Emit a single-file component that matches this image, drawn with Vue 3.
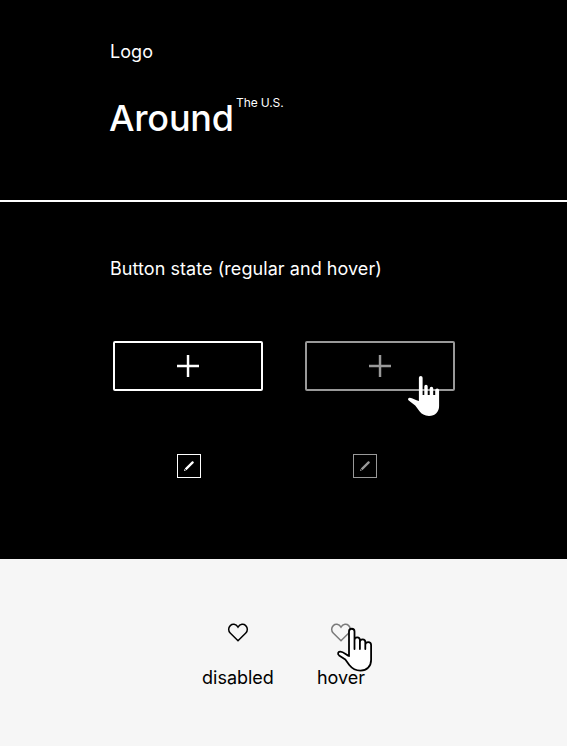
<script setup>
const addButtons = [{ hover: false }, { hover: true }]
const likes = [
  { label: 'disabled', hover: false },
  { label: 'hover', hover: true },
]
</script>

<template>
  <main class="sheet">
    <section class="logo-section">
      <h2 class="title">Logo</h2>
      <div class="logo"><span class="logo-main">Around</span><span class="logo-sup">The U.S.</span></div>
    </section>
    <section class="buttons-section">
      <h2 class="title">Button state (regular and hover)</h2>
      <div class="add-row">
        <button v-for="(b, i) in addButtons" :key="i" class="add" :class="{ dim: b.hover }" aria-label="Add">
          <svg width="22" height="22" viewBox="0 0 22 22"><path d="M9.8 0h2.45v9.8H22v2.45h-9.75V22H9.8v-9.75H0V9.8h9.8z" fill="#fff" /></svg>
        </button>
        <svg class="hand hand-light" width="34" height="42" viewBox="0 0 34 42">
          <path d="M11.900 27V2.800a1.850 1.850 0 0 1 3.700 0V20h1.700V11.500a1.700 1.700 0 0 1 3.400 0V20h2V13.500a1.750 1.750 0 0 1 3.500 0V20h2V15.500a1.950 1.950 0 0 1 3.900 0V31C32.100 37 28 41 22 41C17.500 41 14.700 39 12.500 36.300L8.200 30.500L1.700 25.500C.6 24.600 .9 23 2.500 22.800C5 22.500 8.700 25.500 11.900 26Z" fill="#fff" />
        </svg>
      </div>
      <div class="edit-row">
        <button v-for="(b, i) in addButtons" :key="i" class="edit" :class="{ dim: b.hover }" aria-label="Edit">
          <svg width="10" height="10" viewBox="0 0 10 10"><path d="M0 10L.4 8.100L1.900 9.600ZM.8 7.600L8.100.3Q8.500 0 8.900.3L9.700 1.100Q10 1.500 9.700 1.900L2.400 9.200Z" fill="#fff" /></svg>
        </button>
      </div>
    </section>
    <section class="likes-section">
      <div v-for="item in likes" :key="item.label" class="like">
        <svg class="heart" :class="{ faded: item.hover }" width="22" height="20" viewBox="0 0 22 20">
          <path d="M11 4.100C8.900.7 5.300.7 3.300 2.600C1.100 4.700 1.200 8 3.200 10L11 17.800L18.800 10C20.800 8 20.900 4.700 18.700 2.600C16.700.7 13.100.7 11 4.100Z" fill="none" stroke="#000" stroke-width="1.500" />
        </svg>
        <span class="label">{{ item.label }}</span>
        <svg v-if="item.hover" class="hand hand-dark" width="38" height="46" viewBox="0 0 38 46">
          <path d="M13 29V4.500a2.750 2.750 0 0 1 5.500 0V22V13a2.700 2.700 0 0 1 5.400 0V22V15a2.700 2.700 0 0 1 5.400 0V22V18a2.900 2.900 0 0 1 5.800 0V33C35.100 39.300 30.900 43.600 24.500 43.600C19 43.600 15.800 41.200 13.300 38L9.300 32.400L3.100 28.400C1.300 27 2 24.900 4 24.700C7 24.500 9.700 27.300 13 29Z" fill="#fff" stroke="#000" stroke-width="1.800" stroke-linejoin="round" stroke-linecap="round" />
        </svg>
      </div>
    </section>
  </main>
</template>

<style>
body { margin: 0; background: #f6f6f6; }
</style>

<style scoped>
.sheet { width: 567px; height: 746px; display: flex; flex-direction: column; font-family: Inter, sans-serif; color: #fff; background: #000; overflow: hidden; }
.sheet * { box-sizing: border-box; }
.logo-section { height: 202px; padding: 41px 0 0 110px; border-bottom: 2px solid #fff; }
.title { margin: 0; font-size: 18px; line-height: 22px; font-weight: 400; letter-spacing: .06px; }
.logo { display: flex; align-items: flex-start; margin-top: 33px; }
.logo-main { width: 126px; font-size: 36px; line-height: 44px; font-weight: 500; letter-spacing: -.2px; margin-left: -1px; margin-right: 1px; }
.logo-sup { font-size: 12px; line-height: 14px; letter-spacing: -.1px; }
.buttons-section { height: 357px; padding: 56px 0 0 110px; }
.add-row { position: relative; display: flex; gap: 42px; margin: 61px 0 0 3px; }
button { background: transparent; padding: 0; display: flex; align-items: center; justify-content: center; }
.add { width: 150px; height: 50px; border: 2px solid #fff; border-radius: 2px; }
.dim { opacity: .6; }
.edit-row { display: flex; gap: 152px; margin: 63px 0 0 67px; }
.edit { width: 24px; height: 24px; border: 1px solid #fff; }
.hand { position: absolute; }
.hand-light { left: 294px; top: 34px; }
.likes-section { flex: 1; display: flex; background: #f6f6f6; color: #000; padding: 64px 0 0 202px; gap: 43px; }
.like { position: relative; display: flex; flex-direction: column; align-items: center; height: 70px; }
.heart { display: block; }
.faded { opacity: .5; }
.label { font-size: 18px; line-height: 22px; margin-top: 24px; }
.hand-dark { left: 19px; top: 4px; }
</style>
